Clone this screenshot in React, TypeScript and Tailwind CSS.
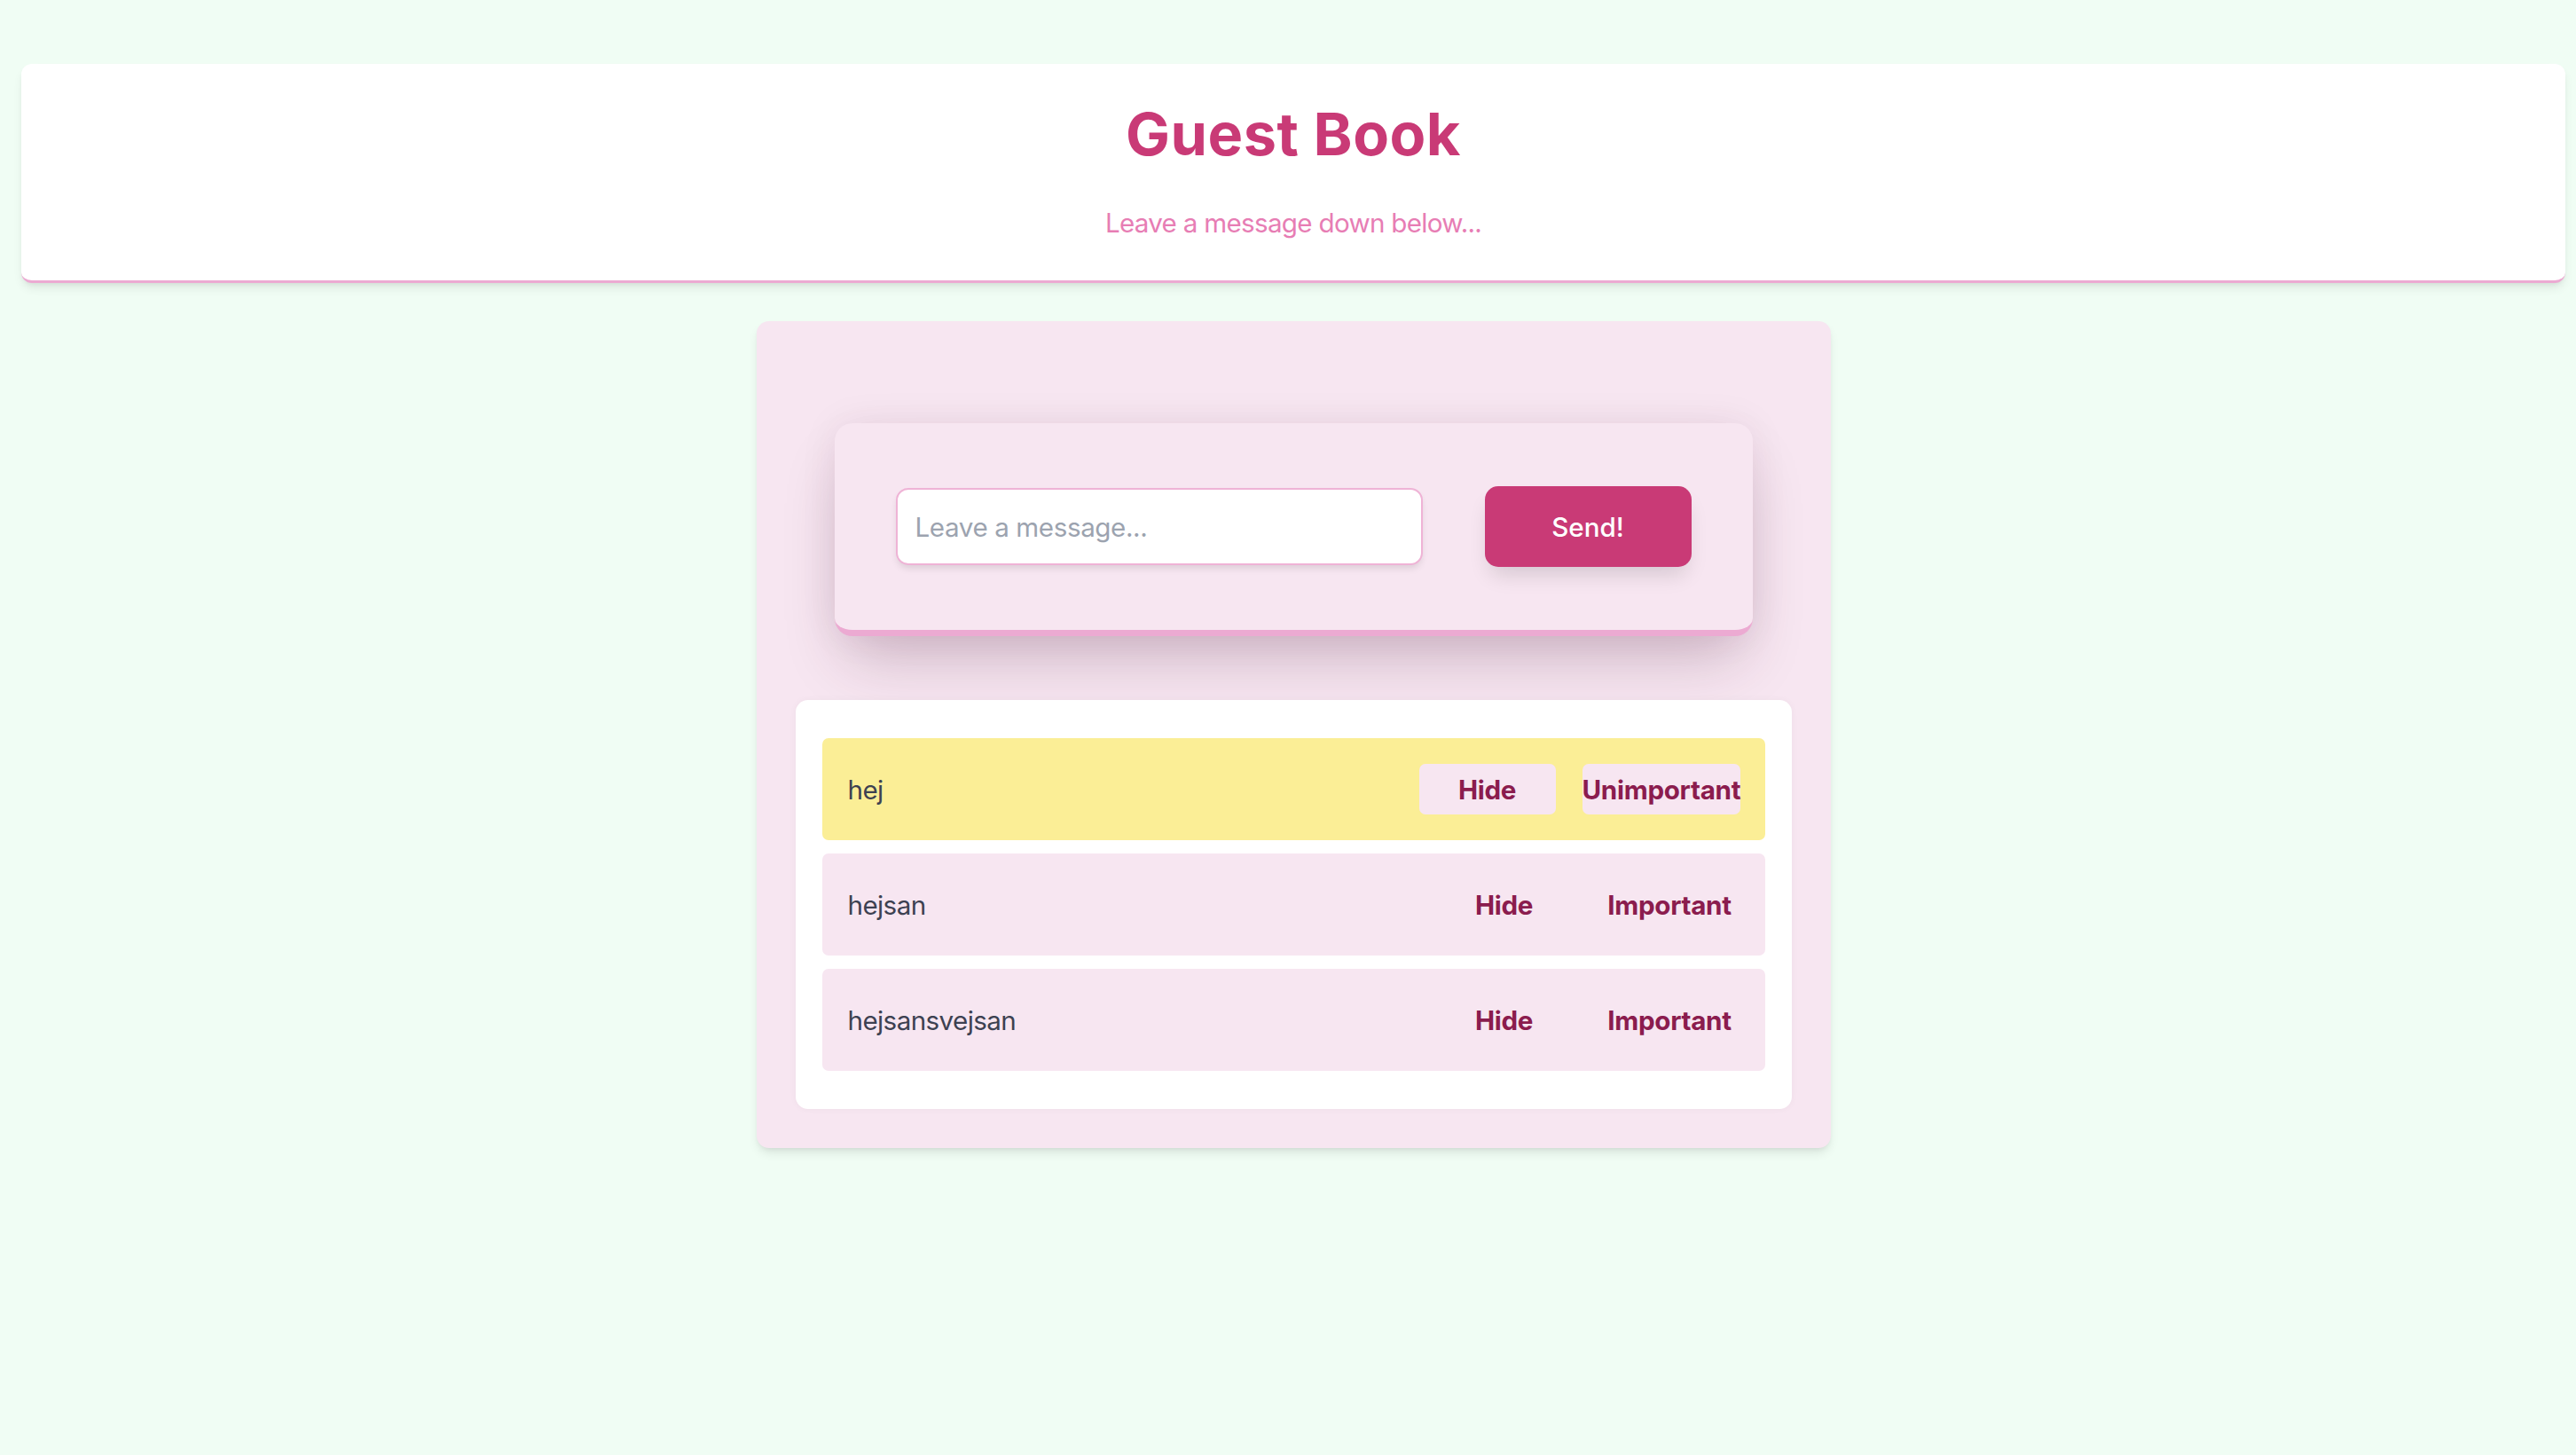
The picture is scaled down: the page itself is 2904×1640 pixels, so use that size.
import React, { useState } from 'react';

type Message = { id: number; text: string; important: boolean };

const initialMessages: Message[] = [
  { id: 1, text: 'hej', important: true },
  { id: 2, text: 'hejsan', important: false },
  { id: 3, text: 'hejsansvejsan', important: false },
];

export default function App() {
  const [messages, setMessages] = useState<Message[]>(initialMessages);
  const [draft, setDraft] = useState('');

  const send = () => {
    if (!draft.trim()) return;
    setMessages([...messages, { id: Date.now(), text: draft, important: false }]);
    setDraft('');
  };

  return (
    <div className="min-h-screen bg-[#f0fdf4] pl-[24px] pr-[12px] pt-[72px] font-['Inter',sans-serif] antialiased">
      {/* Header */}
      <header className="bg-white rounded-[12px] border-b-[3px] border-[#ecaad2] shadow-[0_7px_12px_-2px_rgba(0,0,0,0.09),0_3px_6px_-3px_rgba(0,0,0,0.08)] pt-[42px] pb-[43px] text-center">
        <h1 className="text-[66.6px] leading-[74px] font-bold text-[#c93a76] tracking-[0.5px]">Guest Book</h1>
        <p className="mt-[41px] text-[29.6px] leading-[44.4px] text-[#e77db4] tracking-[-0.7px]">Leave a message down below...</p>
      </header>

      {/* Main card */}
      <main className="mx-auto mt-[43px] w-[1211px] bg-[#f7e6f1] rounded-[14px] p-[44px] shadow-[0_7px_12px_-2px_rgba(0,0,0,0.1),0_3px_6px_-3px_rgba(0,0,0,0.08)]">
        <div className="mx-[44px] mt-[71px] bg-[#f7e6f1] rounded-[20px] border-b-[7px] border-[#ecaad2] shadow-[0_36px_70px_-14px_rgba(70,20,50,0.24),0_0_44px_rgba(70,20,50,0.07)] py-[71px] flex items-center justify-center gap-[70px]">
          <input
            value={draft}
            onChange={(e) => setDraft(e.target.value)}
            placeholder="Leave a message..."
            className="w-[594px] h-[87px] bg-white rounded-[14px] border-[2px] border-[#efb3d6] px-[20px] text-[29.6px] tracking-[-0.4px] text-[#374151] placeholder:text-[#9ca3af] outline-none shadow-[0_5px_9px_-2px_rgba(0,0,0,0.12)]"
          />
          <button
            onClick={send}
            className="w-[233px] h-[91px] bg-[#c93a76] rounded-[15px] text-white text-[29.6px] font-medium shadow-[0_14px_24px_-6px_rgba(0,0,0,0.14)]"
          >
            Send!
          </button>
        </div>

        <div className="mt-[72px] bg-white rounded-[14px] px-[30px] py-[43px] flex flex-col gap-[15px] shadow-[0_0_8px_rgba(0,0,0,0.04)]">
          {messages.map((m) => (
            <div
              key={m.id}
              className={`h-[115px] rounded-[7px] pl-[29px] pr-[28px] flex items-center ${m.important ? 'bg-[#fbee96]' : 'bg-[#f7e6f1]'}`}
            >
              <span className="flex-1 text-[29.6px] leading-[44.4px] tracking-[-0.6px] text-[#3d4151]">{m.text}</span>
              <div className="flex items-center gap-[30px]">
                <button
                  onClick={() => setMessages(messages.filter((x) => x.id !== m.id))}
                  className={`w-[154px] h-[57px] rounded-[7px] text-[29.6px] font-bold tracking-[-0.3px] text-[#8b1c4e] ${m.important ? 'bg-[#f7e6f1]' : ''}`}
                >
                  Hide
                </button>
                <button
                  onClick={() => setMessages(messages.map((x) => (x.id === m.id ? { ...x, important: !x.important } : x)))}
                  className={`h-[57px] rounded-[7px] text-[29.6px] font-bold tracking-[-0.3px] text-[#8b1c4e] whitespace-nowrap ${m.important ? 'w-[178px] bg-[#f7e6f1]' : 'w-[159px]'}`}
                >
                  {m.important ? 'Unimportant' : 'Important'}
                </button>
              </div>
            </div>
          ))}
        </div>
      </main>
    </div>
  );
}
